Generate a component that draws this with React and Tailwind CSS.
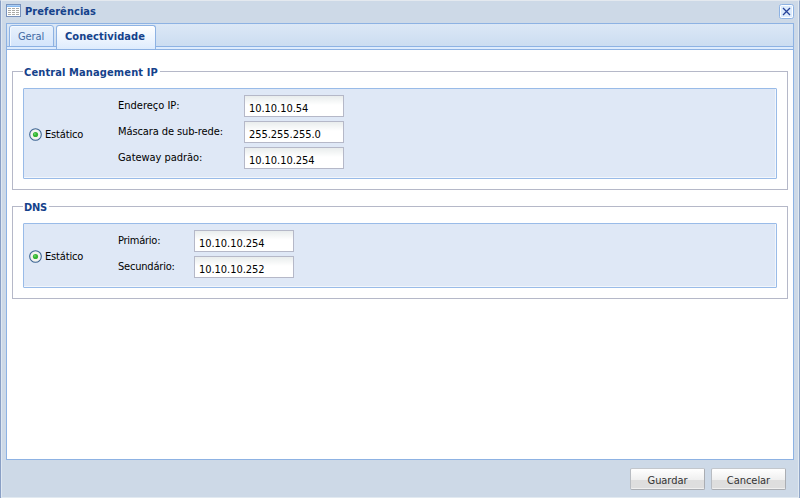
import React from "react";

function Field({ label, value, labelClass, labelText }) {
  return (
    <div className="flex h-[22px]">
      <label className={`${labelClass} shrink-0 pt-[4px] leading-[14px] whitespace-nowrap`}>
        <span className={labelText}>{label}</span>
      </label>
      <div className="h-[22px] w-[100px] border border-[#b5b8c8] bg-white bg-linear-to-b from-[#e9eded] to-white to-45% pt-[6px] pl-1 leading-[14px] tracking-[-0.05px]">
        {value}
      </div>
    </div>
  );
}

function Static() {
  return (
    <div className="flex w-[94px] shrink-0 items-center gap-[3px] pt-[2px] pl-[5px]">
      <svg width="13" height="13" viewBox="0 0 13 13">
        <circle cx="6.5" cy="6.5" r="5.8" fill="#f3f3ef" stroke="#3c6492" strokeWidth="1.1" />
        <circle cx="6.5" cy="6.5" r="2.6" fill="#36b532" />
        <circle cx="5.9" cy="5.9" r="1" fill="#66d363" />
      </svg>
      <span className="pt-[2px] tracking-[-0.15px]">Estático</span>
    </div>
  );
}

function Group({ title, titleClass, className, boxClass, children }) {
  return (
    <section className={`mx-[5px] border border-[#b5b8c8] px-[10px] ${className}`}>
      <div className="-mt-[8px] flex h-[16px]">
        <h2 className={`bg-white pt-px pr-[2px] pl-px font-bold leading-[16px] whitespace-nowrap text-[#15428b] ${titleClass}`}>{title}</h2>
      </div>
      <div className={`mt-[8px] flex rounded-[1px] border border-[#99bbe8] bg-[#dfe8f6] shadow-[inset_-1px_-1px_0_#f2f6fc] ${boxClass}`}>
        <Static />
        <div className="flex flex-col gap-1 pt-[6px]">{children}</div>
      </div>
    </section>
  );
}

function Button({ children }) {
  return (
    <button className="flex h-[22px] w-[75px] justify-center rounded-[2px] border border-[#aaadb2] border-t-[#c3c7cc] border-l-[#b8bcc2] bg-linear-to-b from-white from-0% via-[#efefef] via-55% to-[#dedede] to-56% pt-[5px] leading-[14px] text-[#333333] shadow-[inset_0_-1px_0_#f0f0f0]">
      <span className="tracking-[-0.05px]">{children}</span>
    </button>
  );
}

export default function App() {
  return (
    <main className="flex h-[498px] w-[800px] flex-col overflow-hidden border-t border-r border-l border-t-[#e4e9ef] border-r-[#8fa5c7] border-l-[#899fc5] bg-[#cdd9e7] pr-[5px] pl-[5px] text-[11px] text-black shadow-[inset_1px_0_0_#dfe8f2,inset_-1px_-1px_0_#e2eaf1] [font-family:'DejaVu_Sans_Condensed','DejaVu_Sans',sans-serif] [font-stretch:condensed]">
      <header className="flex h-[22px] shrink-0 items-start">
        <svg className="mt-[3px] shrink-0" width="15" height="13" viewBox="0 0 15 13" shapeRendering="crispEdges">
          <rect x=".5" y=".5" width="14" height="12" fill="#fff" stroke="#7993bd" />
          <path d="M1 1h13v2H1z" fill="#84b7ef" />
          <path d="M1 1h13v1H1z" fill="#a9cdf4" />
          <path d="M2 4.5h3M6 4.5h3M10 4.5h3M2 6.5h3M6 6.5h3M10 6.5h3M2 8.5h3M6 8.5h3M10 8.5h3M2 10.5h3M6 10.5h3M10 10.5h3" stroke="#aaaaa6" />
        </svg>
        <h1 className="ml-[4px] pt-[3px] font-bold leading-[15px] tracking-[0.06px] text-[#15428b]">Preferências</h1>
        <svg className="mt-[3px] ml-auto" width="15" height="15" viewBox="0 0 15 15">
          <rect x=".5" y=".5" width="14" height="14" rx="2" fill="#dcebfc" stroke="#8db2e3" />
          <rect x="1.5" y="1.5" width="12" height="12" rx="1" fill="none" stroke="#fff" />
          <path d="M4 4l7 7M11 4l-7 7" stroke="#26429a" strokeWidth="1.3" />
        </svg>
      </header>

      <div className="flex h-[437px] shrink-0 flex-col border border-[#8db2e3] bg-white">
        <nav className="flex h-[26px] shrink-0 border-b border-[#8db2e3] bg-linear-to-b from-[#dce8f6] to-[#c9dbf0]">
          <div className="flex w-full shrink-0 items-start gap-[2px] pt-px pl-[2px] shadow-[inset_0_-2px_0_#deecfd,inset_0_-3px_0_#8db2e3]">
            <div className="flex h-[22px] w-[45px] justify-center rounded-t-[3px] border border-[#8db2e3] bg-linear-to-b from-[#e8f1fc] to-[#d4e5fb] pt-[4px] leading-[14px] text-[#416aa3] shadow-[inset_1px_1px_0_#f4f9ff]">
              <span className="-ml-px tracking-[-0.1px]">Geral</span>
            </div>
            <div className="flex h-[24px] w-[100px] justify-center rounded-t-[3px] border border-b-0 border-[#8db2e3] bg-linear-to-b from-white to-[#deecfd] pt-[4px] pr-[2px] font-bold leading-[14px] text-[#15428b]">
              <span className="tracking-[0.05px]">Conectividade</span>
            </div>
          </div>
        </nav>

        <Group title="Central Management IP" titleClass="tracking-[0.12px]" className="mt-[21px] h-[119px]" boxClass="h-[91px]">
          <Field label="Endereço IP:" value="10.10.10.54" labelClass="w-[126px]" labelText="" />
          <Field label="Máscara de sub-rede:" value="255.255.255.0" labelClass="w-[126px]" labelText="tracking-[-0.1px]" />
          <Field label="Gateway padrão:" value="10.10.10.254" labelClass="w-[126px]" labelText="tracking-[-0.05px]" />
        </Group>

        <Group title="DNS" titleClass="tracking-[-0.3px]" className="mt-[16px] h-[93px]" boxClass="h-[65px]">
          <Field label="Primário:" value="10.10.10.254" labelClass="w-[76px]" labelText="tracking-[-0.25px]" />
          <Field label="Secundário:" value="10.10.10.252" labelClass="w-[76px]" labelText="tracking-[-0.2px]" />
        </Group>
      </div>

      <footer className="flex justify-end gap-[6px] pt-[8px] pr-[8px]">
        <Button>Guardar</Button>
        <Button>Cancelar</Button>
      </footer>
    </main>
  );
}
